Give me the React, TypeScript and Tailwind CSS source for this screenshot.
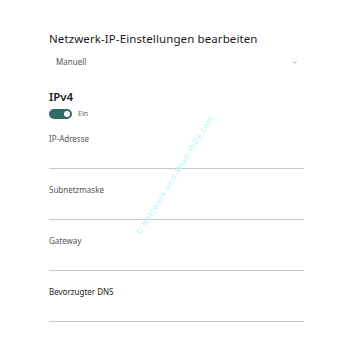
import { ChevronDown } from "lucide-react";

const FIELDS = [
  { label: "IP-Adresse", dark: false },
  { label: "Subnetzmaske", dark: false },
  { label: "Gateway", dark: false },
  { label: "Bevorzugter DNS", dark: true },
];

export default function App() {
  return (
    <div className="relative w-[350px] h-[350px] bg-white overflow-hidden" style={{ fontFamily: "'Noto Sans', 'Open Sans', sans-serif" }}>
      <div className="flex flex-col pl-[49px] pr-[46px] pt-[30px]">
        {/* Header */}
        <h1 className="text-[11.5px] leading-[18px] text-[#1a1a1a] tracking-[0.1px]">Netzwerk-IP-Einstellungen bearbeiten</h1>

        {/* Mode select */}
        <div className="flex items-center justify-between mt-[6px] pl-[7px] pr-[6px] h-[16px]">
          <span className="text-[8px] text-[#555]">Manuell</span>
          <ChevronDown className="w-[7px] h-[7px] text-[#777]" strokeWidth={2} />
        </div>

        {/* IPv4 */}
        <h2 className="mt-[19px] text-[11.5px] leading-[16px] font-semibold text-[#1a1a1a]">IPv4</h2>
        <div className="flex items-center gap-[6px] mt-[4px]">
          <div className="w-[23px] h-[10px] rounded-full bg-[#2f6b67] flex items-center justify-end pr-[2px]">
            <div className="w-[6px] h-[6px] rounded-full bg-white" />
          </div>
          <span className="text-[7px] text-[#666]">Ein</span>
        </div>

        {/* Fields */}
        <div className="flex flex-col mt-[12px]">
          {FIELDS.map((f) => (
            <div key={f.label} className="flex flex-col">
              <span className={`text-[8px] leading-[14px] ${f.dark ? "text-[#222]" : "text-[#555]"}`}>{f.label}</span>
              <div className="h-[22px]" />
              <div className="h-px bg-[#c9c9c9]" />
              <div className="h-[14px]" />
            </div>
          ))}
        </div>
      </div>

      {/* Watermark */}
      <span className="absolute left-[92px] top-[171px] w-[165px] text-center text-[8px] leading-[8px] tracking-[0.6px] text-[#b5f3f7] -rotate-[58deg] whitespace-nowrap">
        © Netzwerk-und-Wlan-Hilfe.com
      </span>
    </div>
  );
}
